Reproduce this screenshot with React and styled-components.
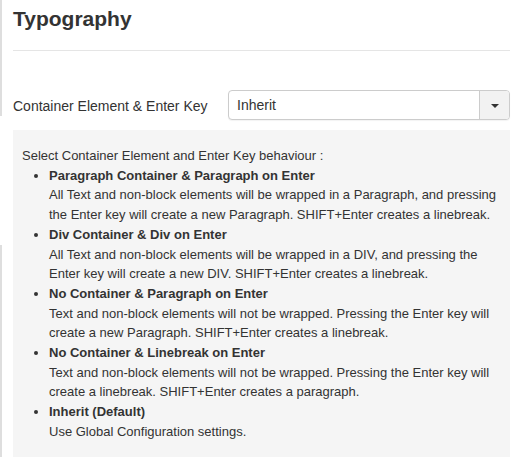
import React from "react"
import styled, { createGlobalStyle } from "styled-components"

const GlobalStyle = createGlobalStyle`
  html, body {
    margin: 0;
    padding: 0;
    background: #fff;
  }
  body {
    font-family: "Liberation Sans", Arial, sans-serif;
    color: #333;
  }
`

const Page = styled.div`
  display: flex;
  width: 517px;
  height: 457px;
  overflow: hidden;
`

// the left edge of the neighbouring column, broken where the tab sits
const Rail = styled.div`
  flex: 0 0 2px;
  background: linear-gradient(
    to bottom,
    #dedede 0 116px,
    transparent 116px 245px,
    #dedede 245px
  );
`

const Content = styled.div`
  flex: 0 0 493px;
  padding-left: 11px;
`

const Title = styled.h2`
  margin: 7px 0 0;
  font-size: 21px;
  line-height: 23px;
  font-weight: 700;
  color: #333;
`

const Rule = styled.hr`
  margin: 20px 0 0;
  border: 0;
  border-top: 1px solid #e5e5e5;
`

const FieldRow = styled.div`
  display: grid;
  grid-template-columns: 215px 282px;
  align-items: center;
  margin-top: 39px;
  height: 30px;
`

const Label = styled.label`
  font-size: 14px;
  line-height: 20px;
  color: #333;
  padding-top: 2px;
`

const Select = styled.div`
  display: flex;
  height: 30px;
  box-sizing: border-box;
  border: 1px solid #ccc;
  border-radius: 4px;
  background: #fff;
  overflow: hidden;
  box-shadow: 0 1px 1px rgba(0, 0, 0, 0.05);
`

const SelectValue = styled.div`
  flex: 1;
  padding: 0 8px;
  font-size: 14px;
  line-height: 28px;
  color: #333;
`

const SelectButton = styled.div`
  flex: 0 0 29px;
  display: flex;
  align-items: center;
  justify-content: center;
  border-left: 1px solid #ccc;
  background: #f2f2f2;
`

const Caret = styled.span`
  width: 0;
  height: 0;
  border-left: 4px solid transparent;
  border-right: 4px solid transparent;
  border-top: 4px solid #333;
  margin-top: 1px;
`

const Help = styled.div`
  margin-top: 10px;
  background: #f5f5f5;
  padding: 16px 9px 20px;
  font-size: 13px;
  line-height: 19.7px;
  color: #333;
  height: 400px;
`

const Intro = styled.p`
  margin: 0;
`

const Options = styled.ul`
  margin: 0;
  padding-left: 27px;
  list-style: disc;
`

const OptionName = styled.strong`
  display: block;
  font-weight: 700;
`

const options = [
  {
    name: "Paragraph Container & Paragraph on Enter",
    text: "All Text and non-block elements will be wrapped in a Paragraph, and pressing the Enter key will create a new Paragraph. SHIFT+Enter creates a linebreak.",
  },
  {
    name: "Div Container & Div on Enter",
    text: "All Text and non-block elements will be wrapped in a DIV, and pressing the Enter key will create a new DIV. SHIFT+Enter creates a linebreak.",
  },
  {
    name: "No Container & Paragraph on Enter",
    text: "Text and non-block elements will not be wrapped. Pressing the Enter key will create a new Paragraph. SHIFT+Enter creates a linebreak.",
  },
  {
    name: "No Container & Linebreak on Enter",
    text: "Text and non-block elements will not be wrapped. Pressing the Enter key will create a linebreak. SHIFT+Enter creates a paragraph.",
  },
  {
    name: "Inherit (Default)",
    text: "Use Global Configuration settings.",
  },
]

const App = () => (
  <>
    <GlobalStyle />
    <Page>
      <Rail />
      <Content>
        <Title>Typography</Title>
        <Rule />
        <FieldRow>
          <Label>Container Element &amp; Enter Key</Label>
          <Select>
            <SelectValue>Inherit</SelectValue>
            <SelectButton>
              <Caret />
            </SelectButton>
          </Select>
        </FieldRow>
        <Help>
          <Intro>Select Container Element and Enter Key behaviour :</Intro>
          <Options>
            {options.map(o => (
              <li key={o.name}>
                <OptionName>{o.name}</OptionName>
                {o.text}
              </li>
            ))}
          </Options>
        </Help>
      </Content>
    </Page>
  </>
)

export default App
